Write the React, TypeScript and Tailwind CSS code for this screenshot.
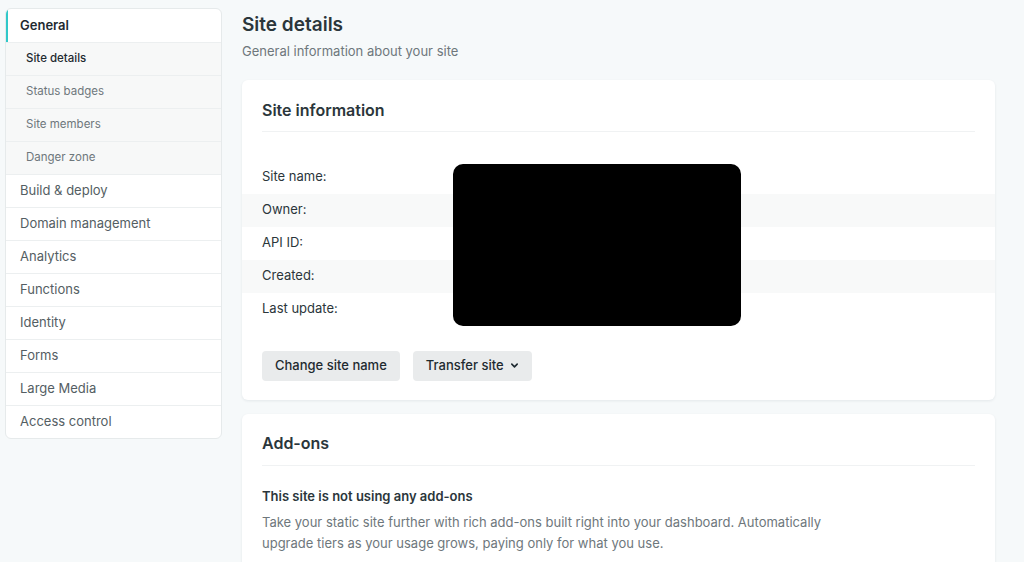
import React from "react";

const subItems = ["Site details", "Status badges", "Site members", "Danger zone"];
const topItems = [
  "Build & deploy",
  "Domain management",
  "Analytics",
  "Functions",
  "Identity",
  "Forms",
  "Large Media",
  "Access control",
];

const rows = ["Site name:", "Owner:", "API ID:", "Created:", "Last update:"];

function Sidebar() {
  return (
    <nav className="w-[217px] shrink-0 self-start rounded-md border border-[#e6eaeb] bg-white overflow-hidden">
      <div className="h-[33px] flex items-center pl-3 border-l-2 border-[#30c8c9] text-[13px] font-semibold text-[#1e2a30]">
        General
      </div>
      {subItems.map((item, i) => (
        <div
          key={item}
          className={`h-[33px] flex items-center pl-[20px] border-t border-[#eceff0] bg-[#f7f8f8] text-[11.5px] ${
            i === 0 ? "text-[#1e2a30] font-medium" : "text-[#6e777c]"
          }`}
        >
          {item}
        </div>
      ))}
      {topItems.map((item) => (
        <div
          key={item}
          className="h-[33px] flex items-center pl-[14px] border-t border-[#eceff0] text-[13px] text-[#545e63]"
        >
          {item}
        </div>
      ))}
    </nav>
  );
}

function SiteInfo() {
  return (
    <section className="relative rounded-md bg-white shadow-[0_1px_3px_rgba(0,40,50,0.08)] pt-5 pb-[19px]">
      <h2 className="px-5 text-[16px] font-semibold text-[#2b363b] leading-5">Site information</h2>
      <div className="mx-5 mt-[11px] border-t border-[#f0f2f3]" />
      <div className="mt-[29px]">
        {rows.map((label, i) => (
          <div
            key={label}
            className={`h-[33px] flex items-center px-5 text-[13px] text-[#2b363b] ${
              i % 2 === 1 ? "bg-[#f8f9f9]" : ""
            }`}
          >
            {label}
          </div>
        ))}
      </div>
      <div className="flex gap-[13px] px-5 mt-[25px]">
        <button className="h-[30px] px-[13px] rounded bg-[#e9ebec] text-[13px] font-medium text-[#1e2a30]">
          Change site name
        </button>
        <button className="h-[30px] px-[13px] rounded bg-[#e9ebec] text-[13px] font-medium text-[#1e2a30] flex items-center gap-[6px]">
          Transfer site
          <svg width="9" height="9" viewBox="0 0 10 10" fill="none">
            <path d="M2 3.5 L5 6.5 L8 3.5" stroke="#1e2a30" strokeWidth="1.8" strokeLinecap="round" strokeLinejoin="round" />
          </svg>
        </button>
      </div>
      <div className="absolute left-[211px] top-[84px] w-[288px] h-[162px] rounded-[10px] bg-black" />
    </section>
  );
}

function AddOns() {
  return (
    <section className="rounded-md bg-white shadow-[0_1px_3px_rgba(0,40,50,0.08)] pt-[19px] pb-8">
      <h2 className="px-5 text-[16px] font-semibold text-[#2b363b] leading-5">Add-ons</h2>
      <div className="mx-5 mt-[12px] border-t border-[#f0f2f3]" />
      <div className="px-5 mt-[21px]">
        <h3 className="text-[13px] font-semibold text-[#2b363b]">This site is not using any add-ons</h3>
        <p className="mt-[6px] text-[13px] leading-[21px] text-[#6e777c] max-w-[560px]">
          Take your static site further with rich add-ons built right into your dashboard. Automatically upgrade
          tiers as your usage grows, paying only for what you use.
        </p>
      </div>
    </section>
  );
}

export default function App() {
  return (
    <div
      className="min-h-[562px] h-[562px] overflow-hidden bg-[#f6f9fa] flex gap-[20px] pl-[5px] pt-[8px]"
      style={{ fontFamily: "Inter, 'Liberation Sans', sans-serif" }}
    >
      <Sidebar />
      <main className="w-[753px] shrink-0">
        <h1 className="text-[19px] font-semibold text-[#2b363b] leading-6 mt-[5px]">Site details</h1>
        <p className="text-[13px] text-[#6e777c] mt-[5px]">General information about your site</p>
        <div className="mt-[18px] flex flex-col gap-[14px]">
          <SiteInfo />
          <AddOns />
        </div>
      </main>
    </div>
  );
}
